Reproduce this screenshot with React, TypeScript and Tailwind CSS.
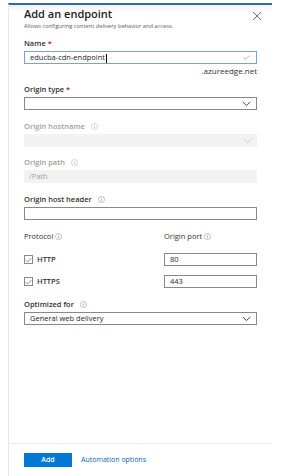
import React from 'react';

const font = { fontFamily: '"Open Sans", "Noto Sans", Arial, sans-serif' };

function Info({ dim = false }: { dim?: boolean }) {
  const c = dim ? '#b3b0ad' : '#8a8886';
  return (
    <svg width="7" height="7" viewBox="0 0 12 12" className="inline-block">
      <circle cx="6" cy="6" r="5.2" fill="none" stroke={c} strokeWidth="0.9" />
      <rect x="5.5" y="5" width="1" height="3.6" fill={c} />
      <rect x="5.5" y="3.2" width="1" height="1" fill={c} />
    </svg>
  );
}

function Chevron({ dim = false }: { dim?: boolean }) {
  return (
    <svg width="9" height="6" viewBox="0 0 9 6">
      <path d="M0.8 1 L4.5 4.6 L8.2 1" fill="none" stroke={dim ? '#c8c6c4' : '#323130'} strokeWidth="0.9" />
    </svg>
  );
}

function Check() {
  return (
    <span className="flex h-[9px] w-[9px] items-center justify-center border border-[#8a8886] bg-white">
      <svg width="7" height="6" viewBox="0 0 7 6">
        <path d="M0.8 3.2 L2.6 5 L6.3 1" fill="none" stroke="#4a7fc1" strokeWidth="0.8" />
      </svg>
    </span>
  );
}

function Label({ text, req, info, dim }: { text: string; req?: boolean; info?: boolean; dim?: boolean }) {
  return (
    <div className={`flex h-[10px] items-center gap-[6px] text-[7.5px] font-semibold leading-[10px] ${dim ? 'text-[#a19f9d]' : 'text-[#323130]'}`}>
      <span>
        {text}
        {req && <span className="text-[#a4262c]"> *</span>}
      </span>
      {info && <Info dim={dim} />}
    </div>
  );
}

export default function App() {
  return (
    <div className="h-[476px] w-[286px] overflow-hidden bg-white pt-[3px]" style={font}>
      <div className="ml-[8px] flex h-[473px] w-[264px] flex-col border-t-2 border-l border-t-[#2d6ab0] border-l-[#e6e6e6] bg-gradient-to-b from-[#f3f3f3] to-white to-[8px]">
        <div className="flex flex-1 flex-col pr-[15px] pl-[15px]">
          <div className="flex items-start justify-between pt-[2px]">
            <div>
              <div className="text-[11px] leading-[14px] font-semibold text-[#201f1e]">Add an endpoint</div>
              <div className="mt-[1px] text-[5.7px] leading-[8px] text-[#605e5c]">
                Allows configuring content delivery behavior and access.
              </div>
            </div>
            <svg width="10" height="10" viewBox="0 0 10 10" className="mt-[4px] -mr-[5px]">
              <path d="M1 1 L9 9 M9 1 L1 9" stroke="#605e5c" strokeWidth="0.9" />
            </svg>
          </div>

          <div className="mt-[8px]">
            <Label text="Name" req />
            <div className="mt-[3px] flex h-[13px] items-center justify-between border border-[#7aa2d4] pr-[6px] pl-[5px]">
              <span className="text-[7.5px] leading-[10px] text-[#201f1e]">educba-cdn-endpoint<span className="ml-[0.5px] inline-block h-[9px] w-[0.5px] bg-black align-middle" /></span>
              <svg width="7" height="5" viewBox="0 0 7 5">
                <path d="M0.6 2.6 L2.4 4.3 L6.4 0.6" fill="none" stroke="#7fbf7f" strokeWidth="0.8" />
              </svg>
            </div>
            <div className="mt-[2px] text-right text-[8px] leading-[9px] text-[#323130]">.azureedge.net</div>
          </div>

          <div className="mt-[9px]">
            <Label text="Origin type" req />
            <div className="mt-[3px] flex h-[13px] items-center justify-end border border-[#8a8886] pr-[5px]">
              <Chevron />
            </div>
          </div>

          <div className="mt-[11px]">
            <Label text="Origin hostname" info dim />
            <div className="mt-[3px] flex h-[13px] items-center justify-end bg-[#f3f2f1] pr-[5px]">
              <Chevron dim />
            </div>
          </div>

          <div className="mt-[10px]">
            <Label text="Origin path" info dim />
            <div className="mt-[3px] flex h-[13px] items-center bg-[#f3f2f1] pl-[5px] text-[7.5px] text-[#a19f9d]">/Path</div>
          </div>

          <div className="mt-[11px]">
            <Label text="Origin host header" info />
            <div className="mt-[3px] h-[13px] border border-[#8a8886]" />
          </div>

          <div className="mt-[11px] grid grid-cols-[140px_1fr]">
            <div className="flex flex-col">
              <div className="flex h-[10px] items-center gap-[2px] text-[7.5px] leading-[10px] text-[#323130]">
                Protocol <Info />
              </div>
              <div className="mt-[12px] flex h-[13px] items-center gap-[4px]">
                <Check />
                <span className="text-[7.5px] font-semibold text-[#323130]">HTTP</span>
              </div>
              <div className="mt-[9px] flex h-[13px] items-center gap-[4px]">
                <Check />
                <span className="text-[7.5px] font-semibold text-[#323130]">HTTPS</span>
              </div>
            </div>
            <div className="flex flex-col">
              <div className="flex h-[10px] items-center gap-[2px] text-[7.5px] leading-[10px] text-[#323130]">
                Origin port <Info />
              </div>
              <div className="mt-[12px] flex h-[13px] items-center border border-[#8a8886] pl-[5px] text-[7.5px] text-[#201f1e]">80</div>
              <div className="mt-[9px] flex h-[13px] items-center border border-[#8a8886] pl-[5px] text-[7.5px] text-[#201f1e]">443</div>
            </div>
          </div>

          <div className="mt-[11px]">
            <Label text="Optimized for" info />
            <div className="mt-[3px] flex h-[13px] items-center justify-between border border-[#8a8886] pr-[5px] pl-[5px]">
              <span className="text-[7.5px] text-[#201f1e]">General web delivery</span>
              <Chevron />
            </div>
          </div>
        </div>

        <div className="flex h-[33px] items-start gap-[9px] border-t border-[#e8e8e8] pt-[9px] pl-[15px]">
          <div className="flex h-[14px] w-[48px] items-center justify-center bg-[#0078d4] text-[7px] font-semibold text-white">Add</div>
          <div className="flex h-[14px] items-center text-[7px] text-[#0067b8]">Automation options</div>
        </div>
      </div>
    </div>
  );
}
